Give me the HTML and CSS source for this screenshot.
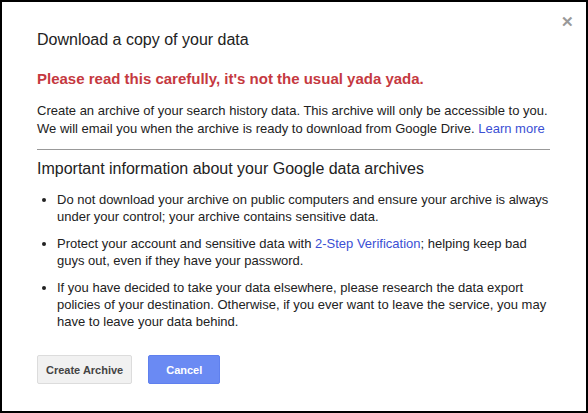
FILE: index.html
```html
<!DOCTYPE html>
<html>
<head>
<meta charset="utf-8">
<link rel="stylesheet" href="styles.css">
</head>
<body>
<div class="dialog">
  <span class="close">&#x2715;</span>
  <h1 class="title">Download a copy of your data</h1>
  <p class="warning">Please read this carefully, it's not the usual yada yada.</p>
  <p class="intro">Create an archive of your search history data. This archive will only be accessible to you. We will email you when the archive is ready to download from Google Drive. <a href="#" class="link">Learn more</a></p>
  <hr class="rule">
  <h2 class="subtitle">Important information about your Google data archives</h2>
  <ul class="points">
    <li>Do not download your archive on public computers and ensure your archive is always under your control; your archive contains sensitive data.</li>
    <li>Protect your account and sensitive data with <a href="#" class="link">2-Step Verification</a>; helping keep bad guys out, even if they have your password.</li>
    <li>If you have decided to take your data elsewhere, please research the data export policies of your destination. Otherwise, if you ever want to leave the service, you may have to leave your data behind.</li>
  </ul>
  <div class="actions">
    <button class="btn btn-secondary">Create Archive</button>
    <button class="btn btn-primary">Cancel</button>
  </div>
</div>
</body>
</html>
```
FILE: styles.css
```css
html, body {
  margin: 0;
  padding: 0;
  background: #fff;
}
.dialog {
  position: relative;
  box-sizing: border-box;
  width: 588px;
  height: 413px;
  border: 2px solid #000;
  padding: 28px 36px 0 35px;
  font-family: "Liberation Sans", Arial, sans-serif;
  color: #222;
}
.close {
  position: absolute;
  top: 12px;
  right: 12px;
  font-size: 15px;
  font-weight: bold;
  color: #999;
  line-height: 16px;
}
.title {
  margin: 0;
  font-size: 16px;
  font-weight: normal;
  line-height: 20px;
  color: #222;
}
.warning {
  margin: 20px 0 0;
  font-size: 15px;
  font-weight: bold;
  line-height: 18px;
  color: #c5393f;
}
.intro {
  margin: 14px 0 0;
  font-size: 13px;
  line-height: 18px;
}
.link {
  color: #3b4fd4;
  text-decoration: none;
}
.rule {
  margin: 11px 0 0;
  border: 0;
  border-top: 1px solid #999;
  height: 0;
}
.subtitle {
  margin: 9px 0 0;
  font-size: 16px;
  font-weight: normal;
  line-height: 20px;
}
.points {
  margin: 12px 0 0;
  padding-left: 20px;
  font-size: 13px;
  line-height: 17px;
}
.points li {
  margin-bottom: 10px;
}
.actions {
  display: flex;
  gap: 16px;
  margin-top: 25px;
}
.btn {
  height: 29px;
  padding: 0 8px;
  border-radius: 2px;
  font-family: "Liberation Sans", Arial, sans-serif;
  font-size: 11px;
  font-weight: bold;
  cursor: pointer;
}
.btn-secondary {
  min-width: 95px;
  background: #f1f1f1;
  border: 1px solid #dcdcdc;
  color: #444;
}
.btn-primary {
  min-width: 72px;
  background: #6a8af3;
  border: 1px solid #5f80ee;
  color: #fff;
}
```
